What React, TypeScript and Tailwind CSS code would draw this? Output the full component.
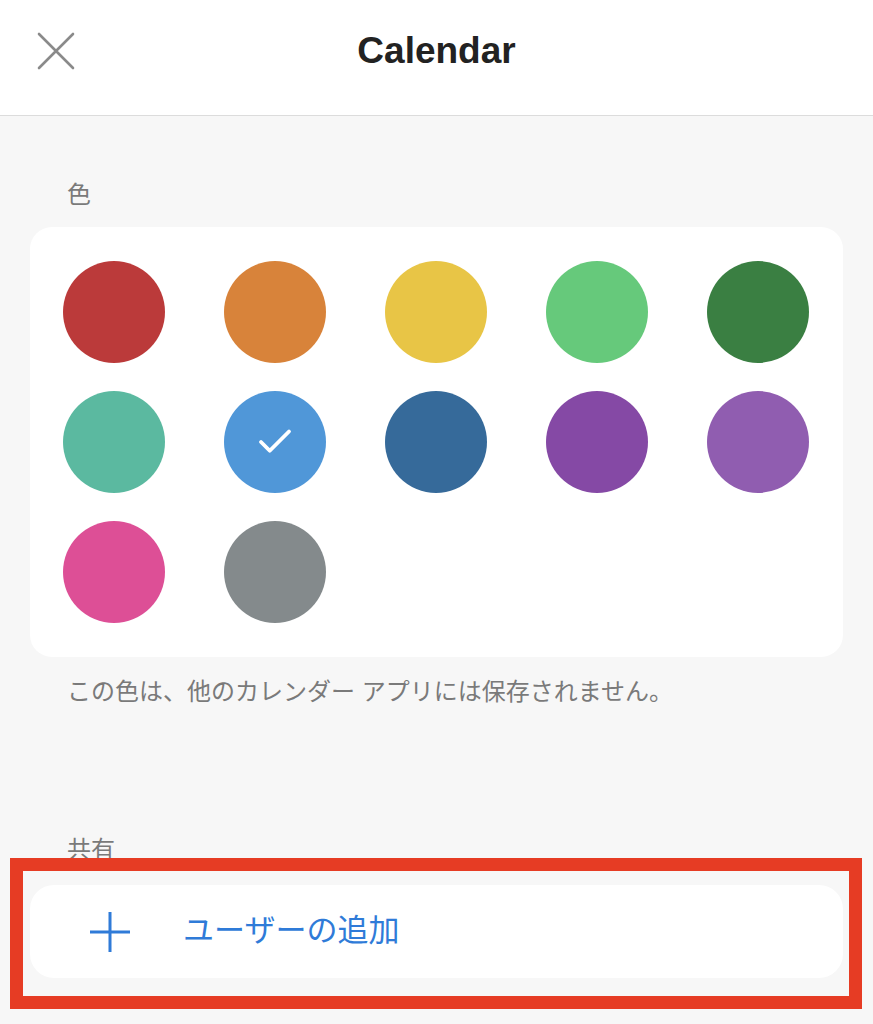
import { Check } from 'lucide-react';

const colors = [
  '#bb3a3a',
  '#d8833a',
  '#e8c546',
  '#66c97b',
  '#3a7f42',
  '#5bb9a0',
  '#5097d8',
  '#366a9a',
  '#8549a5',
  '#905db0',
  '#dd4f96',
  '#848a8c',
];

const selected = 6;

export default function App() {
  return (
    <div className="relative min-h-[1024px] bg-[#f7f7f7] font-['Liberation_Sans','Noto_Sans_CJK_JP',sans-serif]">
      <header className="relative flex h-[116px] items-center justify-center border-b border-[#dcdcdc] bg-white">
        <button className="absolute left-[37px] top-[32px] h-[38px] w-[38px]">
          <svg viewBox="0 0 38 38" className="h-full w-full" fill="none" stroke="#8a8a8a" strokeWidth="2.6" strokeLinecap="round">
            <path d="M2 2L36 36M36 2L2 36" />
          </svg>
        </button>
        <h1 className="-mt-[14px] text-[37px] font-bold text-[#222]">Calendar</h1>
      </header>

      <main className="px-[30px]">
        <div className="pl-[37px] pt-[61px] text-[24px] leading-[36px] text-[#7a7a7a]">色</div>

        <div className="mt-[14px] grid grid-cols-[repeat(5,102px)] justify-between gap-y-[28px] rounded-[22px] bg-white py-[34px] pl-[33px] pr-[34px]">
          {colors.map((c, i) => (
            <div
              key={c}
              className="flex h-[102px] w-[102px] items-center justify-center rounded-full"
              style={{ backgroundColor: c }}
            >
              {i === selected && <Check className="h-[42px] w-[42px] text-white" strokeWidth={2.2} />}
            </div>
          ))}
        </div>

        <p className="mt-[17px] pl-[37px] text-[24px] leading-[36px] text-[#7a7a7a]">
          この色は、他のカレンダー アプリには保存されません。
        </p>

        <div className="mt-[122px] pl-[37px] text-[24px] leading-[36px] text-[#7a7a7a]">共有</div>

        <button className="mt-[17px] flex h-[93px] w-full items-center rounded-[24px] bg-white pl-[60px] text-left">
          <svg viewBox="0 0 40 40" className="h-[40px] w-[40px]" fill="none" stroke="#2f7bd8" strokeWidth="3">
            <path d="M20 0V40M0 20H40" />
          </svg>
          <span className="ml-[53px] text-[31px] text-[#2f7bd8]">ユーザーの追加</span>
        </button>
      </main>

      <div className="pointer-events-none absolute left-[10px] top-[858px] h-[151px] w-[852px] border-[13px] border-[#e63c24]" />
    </div>
  );
}
